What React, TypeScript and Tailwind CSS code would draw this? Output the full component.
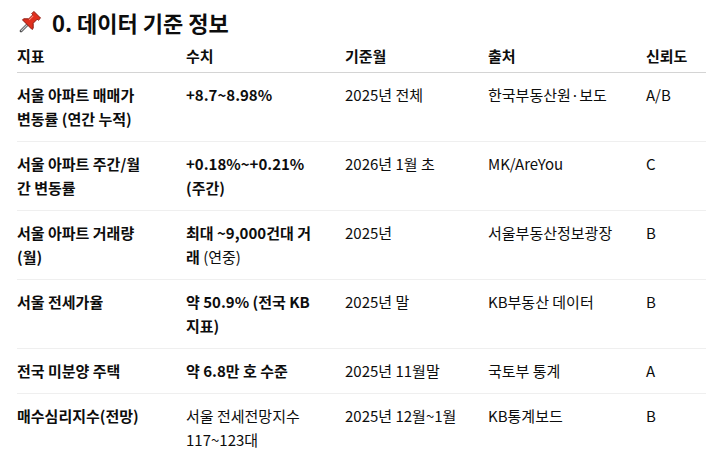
import React from "react";

type Row = {
  name: React.ReactNode;
  value: React.ReactNode;
  month: string;
  source: string;
  trust: string;
};

const rows: Row[] = [
  {
    name: (<>서울 아파트 매매가<br />변동률 (연간 누적)</>),
    value: <span className="font-bold">+8.7~8.98%</span>,
    month: "2025년 전체",
    source: "한국부동산원·보도",
    trust: "A/B",
  },
  {
    name: (<>서울 아파트 주간/월<br />간 변동률</>),
    value: <span className="font-bold">+0.18%~+0.21%<br />(주간)</span>,
    month: "2026년 1월 초",
    source: "MK/AreYou",
    trust: "C",
  },
  {
    name: (<>서울 아파트 거래량<br />(월)</>),
    value: (<><span className="font-bold">최대 ~9,000건대 거<br />래</span> (연중)</>),
    month: "2025년",
    source: "서울부동산정보광장",
    trust: "B",
  },
  {
    name: "서울 전세가율",
    value: <span className="font-bold">약 50.9% (전국 KB<br />지표)</span>,
    month: "2025년 말",
    source: "KB부동산 데이터",
    trust: "B",
  },
  {
    name: "전국 미분양 주택",
    value: <span className="font-bold">약 6.8만 호 수준</span>,
    month: "2025년 11월말",
    source: "국토부 통계",
    trust: "A",
  },
  {
    name: "매수심리지수(전망)",
    value: (<>서울 전세전망지수<br />117~123대</>),
    month: "2025년 12월~1월",
    source: "KB통계보드",
    trust: "B",
  },
];

function Pin() {
  return (
    <svg width="25" height="25" viewBox="0 0 24 24" aria-hidden="true">
      <g transform="rotate(45 12 12)">
        <line x1="12" y1="14" x2="12" y2="23.5" stroke="#4b4b4b" strokeWidth="2.6" strokeLinecap="round" />
        <line x1="12" y1="14" x2="12" y2="23" stroke="#c9ccd0" strokeWidth="1.2" strokeLinecap="round" />
        <path d="M7.5 1.5 H16.5 V4.5 H15 V10 L18.5 13.5 V15 H5.5 V13.5 L9 10 V4.5 H7.5 Z" fill="#e0301e" stroke="#8a1a10" strokeWidth="0.9" strokeLinejoin="round" />
        <path d="M10 5 V10.5" stroke="#ff8a7a" strokeWidth="1" />
      </g>
    </svg>
  );
}

export default function App() {
  const font = { fontFamily: '"Noto Sans CJK KR", "Noto Sans", sans-serif' };
  return (
    <div className="w-[706px] h-[455px] overflow-hidden bg-white text-[#0d0d0d]" style={font}>
      <div className="pl-[17px] pt-[8px]">
        <div className="flex items-center h-[28px] gap-[10px]">
          <Pin />
          <h1 className="text-[22px] font-bold leading-[28px]">0. 데이터 기준 정보</h1>
        </div>
        <table className="table-fixed border-collapse w-[760px] text-[15px] leading-[24px]">
          <colgroup>
            <col className="w-[169px]" />
            <col className="w-[159px]" />
            <col className="w-[143px]" />
            <col className="w-[158px]" />
            <col className="w-[131px]" />
          </colgroup>
          <thead>
            <tr className="border-b border-[#d4d4d4]">
              {["지표", "수치", "기준월", "출처", "신뢰도"].map((h) => (
                <th key={h} className="text-left font-bold pt-[8px] pb-[4px] p-0 whitespace-nowrap">
                  {h}
                </th>
              ))}
            </tr>
          </thead>
          <tbody>
            {rows.map((r, i) => (
              <tr key={i} className={i < rows.length - 1 ? "border-b border-[#efefef]" : ""}>
                <td className="align-top py-[10px] font-bold whitespace-nowrap">{r.name}</td>
                <td className="align-top py-[10px] whitespace-nowrap">{r.value}</td>
                <td className="align-top py-[10px] whitespace-nowrap">{r.month}</td>
                <td className="align-top py-[10px] whitespace-nowrap">{r.source}</td>
                <td className="align-top py-[10px] whitespace-nowrap">{r.trust}</td>
              </tr>
            ))}
          </tbody>
        </table>
      </div>
    </div>
  );
}
